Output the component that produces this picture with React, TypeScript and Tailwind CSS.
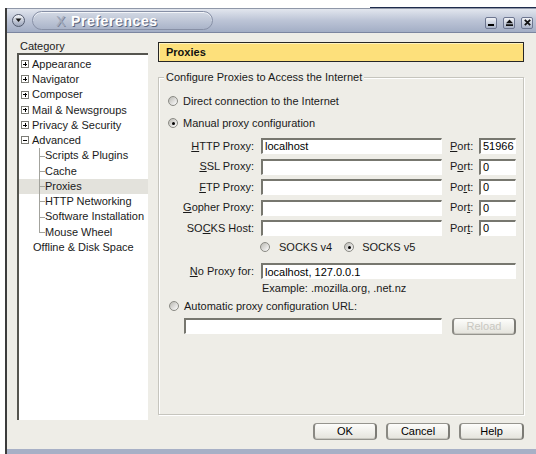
import { ReactNode } from "react";

const font = { fontFamily: '"Liberation Sans", Arial, sans-serif' };

const Radio = ({ checked }: { checked?: boolean }) => (
  <span className="inline-flex h-[10px] w-[10px] shrink-0 items-center justify-center rounded-full border border-[#8a8a84] bg-gradient-to-br from-[#b9b8b2] to-[#ffffff]">
    {checked && <span className="h-[3px] w-[3px] rounded-full bg-black" />}
  </span>
);

const Field = ({ value, className }: { value?: string; className?: string }) => (
  <div
    className={
      "flex h-[16px] items-center border-t-2 border-l-2 border-[#77776f] border-r border-b border-r-[#fff] border-b-[#fff] bg-white px-[2px] text-[11px] text-black " +
      (className ?? "")
    }
  >
    {value}
  </div>
);

const Btn = ({ children, className, disabled }: { children: ReactNode; className?: string; disabled?: boolean }) => (
  <div
    className={
      "flex items-center justify-center rounded-[4px] border border-[#95948e] border-l-2 border-r-2 border-l-[#8a8983] border-r-[#7c7b75] bg-gradient-to-b from-[#fdfdfb] to-[#e4e3dc] text-[11px] shadow-[inset_0_-1px_0_#c9c8c1] " +
      (disabled ? "text-[#c8c7c1] " : "text-black ") +
      (className ?? "")
    }
  >
    {children}
  </div>
);

const ProxyRow = ({ label, port, value, portLabel }: { label: ReactNode; port: string; value?: string; portLabel: ReactNode }) => (
  <div className="flex h-[20.5px] items-center">
    <div className="w-[102px] pr-[7px] text-right">{label}</div>
    <Field value={value} className="w-[181px]" />
    <div className="w-[37px] pl-[8px]">{portLabel}</div>
    <Field value={port} className="w-[37px]" />
  </div>
);

const tree: { label: string; kind: "plus" | "minus" | "child" | "top"; selected?: boolean; last?: boolean }[] = [
  { label: "Appearance", kind: "plus" },
  { label: "Navigator", kind: "plus" },
  { label: "Composer", kind: "plus" },
  { label: "Mail & Newsgroups", kind: "plus" },
  { label: "Privacy & Security", kind: "plus" },
  { label: "Advanced", kind: "minus" },
  { label: "Scripts & Plugins", kind: "child" },
  { label: "Cache", kind: "child" },
  { label: "Proxies", kind: "child", selected: true },
  { label: "HTTP Networking", kind: "child" },
  { label: "Software Installation", kind: "child" },
  { label: "Mouse Wheel", kind: "child", last: true },
  { label: "Offline & Disk Space", kind: "top" },
];

const Toggle = ({ open }: { open: boolean }) => (
  <span className="relative mr-[3px] inline-block h-[8px] w-[8px] shrink-0 border border-[#7d7d77] bg-white">
    <span className="absolute left-[1px] top-[2.5px] h-px w-[4px] bg-black" />
    {!open && <span className="absolute left-[2.5px] top-[1px] h-[4px] w-px bg-black" />}
  </span>
);

export default function App() {
  return (
    <div className="h-[454px] w-[536px] overflow-hidden bg-white text-[11px] text-[#1a1a1a]" style={font}>
      {/* edge of the window behind */}
      <div className="flex h-[8px] items-end justify-end">
        <div className="h-[1px] w-[166px] bg-[#1f2c4c]" />
      </div>
      <div className="ml-[5px] flex h-[446px] flex-col border-l-2 border-[#3c3c3c] bg-[#eeede7]">
        {/* title bar */}
        <div className="flex h-[25px] items-center border-t border-t-[#8f97a8] border-b border-b-[#7c86a0] bg-gradient-to-b from-[#e2e6ee] via-[#bcc4d6] to-[#a3aec5] pl-[5px] pr-[3px]">
          <span className="flex h-[13px] w-[13px] items-center justify-center rounded-full border border-[#535b6e] bg-gradient-to-b from-[#f6f7fa] to-[#9aa4ba]">
            <svg width="7" height="5" viewBox="0 0 7 5">
              <path d="M0.5 0.5 L3.5 4 L6.5 0.5 Z" fill="#1a1a1a" />
            </svg>
          </span>
          <div className="ml-[7px] flex h-[19px] w-[181px] items-center rounded-full border border-[#8790a6] bg-gradient-to-b from-[#d3d9e4] to-[#aab4c9] pl-[23px] shadow-[inset_0_1px_0_#f2f4f8]">
            <span className="text-[14px] font-bold leading-[16px] tracking-[0.6px] text-white [text-shadow:1px_1px_0_#5c667e]">
              <span className="mr-[5px] font-normal text-[#a4acbd] [text-shadow:1px_1px_0_#7a8398]">X</span>Preferences
            </span>
          </div>
          <div className="ml-auto mt-[4px] flex gap-[6px]">
            {["min", "max", "close"].map((b) => (
              <span key={b} className="flex h-[12px] w-[12px] items-center justify-center rounded-[2px] border border-[#6d7690] bg-gradient-to-b from-[#f1f3f7] to-[#a9b3c8]">
                {b === "min" && <span className="mt-[5px] h-[2px] w-[6px] bg-black" />}
                {b === "max" && (
                  <svg width="7" height="7" viewBox="0 0 7 7">
                    <path d="M0 4.2 L3.5 0.5 L7 4.2 Z M0 5.2 H7 V7 H0 Z" fill="#111" />
                  </svg>
                )}
                {b === "close" && (
                  <svg width="7" height="7" viewBox="0 0 7 7">
                    <path d="M0.8 0.8 L6.2 6.2 M6.2 0.8 L0.8 6.2" stroke="#111" strokeWidth="1.8" />
                  </svg>
                )}
              </span>
            ))}
          </div>
        </div>

        <div className="flex flex-1">
          {/* category tree */}
          <div className="ml-[10px] flex w-[131px] flex-col pt-[7px]">
            <div className="h-[12px] pl-[3px] leading-[12px] text-[#222]">Category</div>
            <div className="mt-[1px] h-[367px] border-t-2 border-l-2 border-[#55554f] bg-white pt-[1.5px]">
              {tree.map((t) => (
                <div
                  key={t.label}
                  className={
                    "relative flex h-[15.25px] items-center " +
                    (t.selected ? "bg-[#e3e2dc] " : "") +
                    (t.kind === "child" ? "pl-[26px]" : t.kind === "top" ? "pl-[14px]" : "pl-[2px]")
                  }
                >
                  {t.kind === "child" && (
                    <>
                      <span className={"absolute left-[20px] top-0 w-px bg-[#a3a39d] " + (t.last ? "h-[8px]" : "h-[15.25px]")} />
                      <span className="absolute left-[20px] top-[7.5px] h-px w-[6px] bg-[#a3a39d]" />
                    </>
                  )}
                  {t.kind === "plus" && <Toggle open={false} />}
                  {t.kind === "minus" && <Toggle open />}
                  <span>{t.label}</span>
                </div>
              ))}
            </div>
          </div>

          {/* proxies pane */}
          <div className="ml-[10px] flex w-[366px] flex-col pt-[9px]">
            <div className="flex h-[20px] items-center border border-[#262626] bg-[#fde07b] pl-[7px] text-[11px] font-bold text-[#111] shadow-[inset_1px_1px_0_#fff3c0]">
              Proxies
            </div>
            <div className="relative mt-[15px] h-[338px] border border-[#c6c5be] shadow-[inset_1px_1px_0_#fff,1px_1px_0_#fff]">
              <div className="absolute left-[5px] top-[-7px] bg-[#eeede7] px-[2px] leading-[13px]">Configure Proxies to Access the Internet</div>
              <div className="flex h-[14px] items-center gap-[5px] pl-[9px] mt-[16px]">
                <Radio />
                <span>Direct connection to the Internet</span>
              </div>
              <div className="mt-[8px] flex h-[14px] items-center gap-[5px] pl-[9px]">
                <Radio checked />
                <span>Manual proxy configuration</span>
              </div>
              <div className="mt-[5.75px] flex flex-col">
                <ProxyRow
                  label={<><u>H</u>TTP Proxy:</>}
                  value="localhost"
                  portLabel={<><u>P</u>ort:</>}
                  port="51966"
                />
                <ProxyRow label={<><u>S</u>SL Proxy:</>} portLabel={<>P<u>o</u>rt:</>} port="0" />
                <ProxyRow label={<><u>F</u>TP Proxy:</>} portLabel={<>Po<u>r</u>t:</>} port="0" />
                <ProxyRow label={<><u>G</u>opher Proxy:</>} portLabel={<>Por<u>t</u>:</>} port="0" />
                <ProxyRow label={<>SO<u>C</u>KS Host:</>} portLabel={<>Por<u>t</u>:</>} port="0" />
              </div>
              <div className="mt-[1px] flex h-[16px] items-center pl-[101px]">
                <Radio />
                <span className="ml-[9px]">SOCKS v4</span>
                <span className="ml-[12px] flex"><Radio checked /></span>
                <span className="ml-[8px]">SOCKS v5</span>
              </div>
              <div className="mt-[7.5px] flex h-[17px] items-center">
                <div className="w-[102px] pr-[7px] text-right"><u>N</u>o Proxy for:</div>
                <Field value="localhost, 127.0.0.1" className="w-[255px]" />
              </div>
              <div className="mt-[2px] h-[13px] pl-[103px] leading-[13px]">Example: .mozilla.org, .net.nz</div>
              <div className="mt-[4.5px] flex h-[14px] items-center gap-[5px] pl-[10px]">
                <Radio />
                <span>Automatic proxy configuration URL:</span>
              </div>
              <div className="mt-[5px] flex h-[16px] items-center pl-[25px]">
                <Field className="w-[258px]" />
                <Btn disabled className="ml-[10px] h-[17px] w-[64px]">Reload</Btn>
              </div>
            </div>
            <div className="mt-[8px] flex justify-end gap-[9px] pr-[0px]">
              <Btn className="h-[17px] w-[64px]">OK</Btn>
              <Btn className="h-[17px] w-[64px]">Cancel</Btn>
              <Btn className="h-[17px] w-[65px]">Help</Btn>
            </div>
          </div>
        </div>
        <div className="h-[5px] bg-[#a7b0c6]" />
      </div>
    </div>
  );
}
